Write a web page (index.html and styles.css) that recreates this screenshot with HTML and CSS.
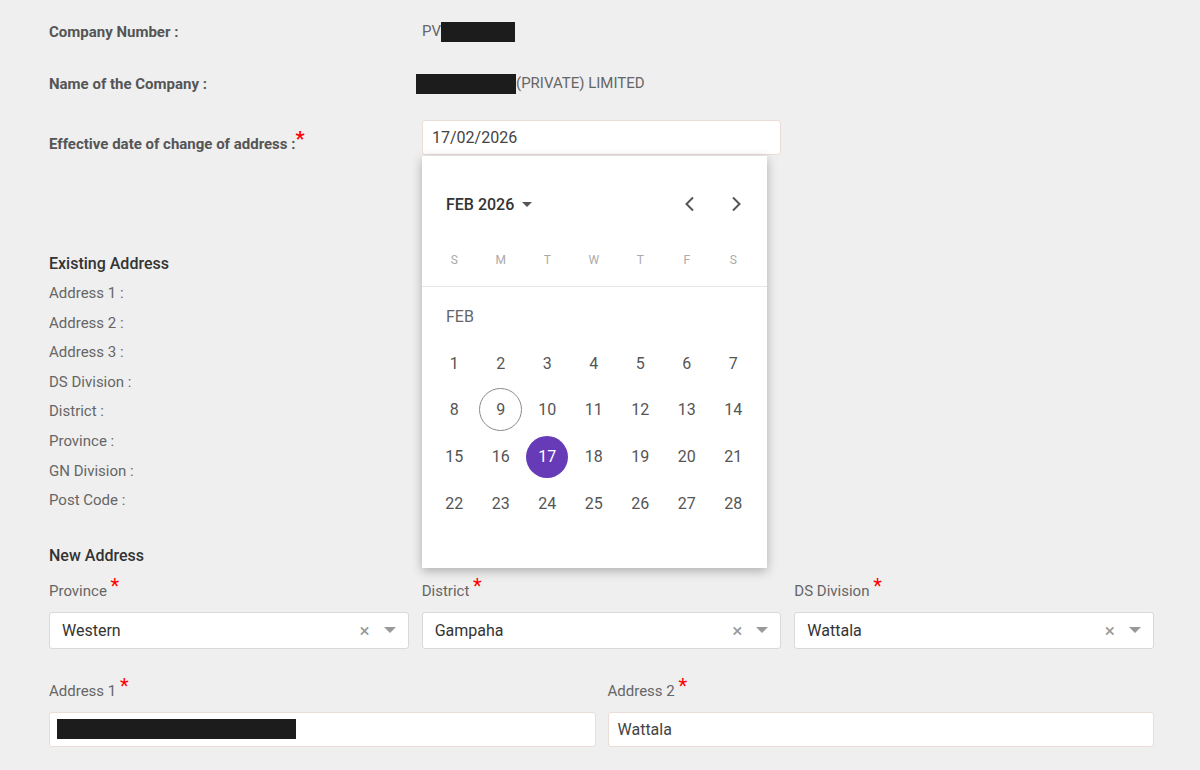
FILE: index.html
```html
<!DOCTYPE html>
<html lang="en">
<head>
  <meta charset="UTF-8">
  <meta name="viewport" content="width=device-width, initial-scale=1.0">
  <title>Change of Registered Address</title>
  <link rel="stylesheet" href="styles.css">
</head>
<body>

<main class="page">
  <div class="info-row">
    <div class="info-label">Company Number :</div>
    <div class="info-value">PV<span class="redact redact-id"></span></div>
  </div>
  <div class="info-row">
    <div class="info-label">Name of the Company :</div>
    <div class="info-value"><span class="redact redact-name"></span>(PRIVATE) LIMITED</div>
  </div>

  <div class="date-row">
    <label class="info-label date-label">Effective date of change of address :<span class="req">*</span></label>
    <div class="date-field">
      <input type="text" class="text-input" value="17/02/2026">

      <!-- open calendar -->
      <div class="datepicker">
        <div class="dp-head">
          <div class="dp-month">FEB 2026 <span class="caret caret-dark"></span></div>
          <div class="dp-nav">
            <svg width="12" height="16" viewBox="0 0 12 16"><path d="M9 1.5 L2.5 8 L9 14.5" fill="none" stroke="#555" stroke-width="2"/></svg>
            <svg width="12" height="16" viewBox="0 0 12 16"><path d="M3 1.5 L9.5 8 L3 14.5" fill="none" stroke="#555" stroke-width="2"/></svg>
          </div>
        </div>
        <div class="dp-week">
          <span>S</span><span>M</span><span>T</span><span>W</span><span>T</span><span>F</span><span>S</span>
        </div>
        <div class="dp-body">
          <div class="dp-label">FEB</div>
          <div class="dp-days" id="dpDays"></div>
        </div>
      </div>
    </div>
  </div>

  <section class="existing">
    <h3 class="section-title">Existing Address</h3>
    <div class="existing-line">Address 1 :</div>
    <div class="existing-line">Address 2 :</div>
    <div class="existing-line">Address 3 :</div>
    <div class="existing-line">DS Division :</div>
    <div class="existing-line">District :</div>
    <div class="existing-line">Province :</div>
    <div class="existing-line">GN Division :</div>
    <div class="existing-line">Post Code :</div>
  </section>

  <section class="new-address">
    <h3 class="section-title">New Address</h3>
    <div class="field-grid three">
      <div class="field">
        <label>Province <span class="req">*</span></label>
        <div class="select"><span class="select-value">Western</span><span class="clear">&times;</span><span class="caret"></span></div>
      </div>
      <div class="field">
        <label>District <span class="req">*</span></label>
        <div class="select"><span class="select-value">Gampaha</span><span class="clear">&times;</span><span class="caret"></span></div>
      </div>
      <div class="field">
        <label>DS Division <span class="req">*</span></label>
        <div class="select"><span class="select-value">Wattala</span><span class="clear">&times;</span><span class="caret"></span></div>
      </div>
    </div>
    <div class="field-grid two">
      <div class="field">
        <label>Address 1 <span class="req">*</span></label>
        <div class="text-input filled"><span class="redact redact-addr"></span></div>
      </div>
      <div class="field">
        <label>Address 2 <span class="req">*</span></label>
        <input type="text" class="text-input" value="Wattala">
      </div>
    </div>
  </section>
</main>

<script>
  const dpDays = document.getElementById('dpDays');
  const today = 9;
  const selected = 17;

  for (let d = 1; d <= 28; d++) {
    const cell = document.createElement('span');
    cell.classList.add('day');
    if (d === today) cell.classList.add('today');
    if (d === selected) cell.classList.add('selected');
    cell.textContent = d;
    dpDays.appendChild(cell);
  }
</script>

</body>
</html>
```

FILE: styles.css
```css
/* base */
body {
  margin: 0;
  padding: 0;
  background-color: #efefef;
  font-family: Roboto, 'Liberation Sans', sans-serif;
  color: #555;
}
.page {
  padding: 6px 46px 40px 49px;
}
.redact {
  display: inline-block;
  background-color: #1c1c1c;
  vertical-align: middle;
}
.redact-id {
  width: 74px;
  height: 20px;
}
.redact-name {
  width: 100px;
  height: 20px;
  margin-left: -6px;
}
.redact-addr {
  width: 239px;
  height: 20px;
}
.req {
  color: #f00;
  font-size: 20px;
  line-height: 0;
  position: relative;
  top: -3px;
}

/* company info */
.info-row {
  display: grid;
  grid-template-columns: 373px 1fr;
  align-items: center;
  height: 52px;
}
.info-label {
  font-size: 15px;
  font-weight: bold;
  color: #555;
}
.info-value {
  font-size: 15px;
  color: #666;
}
.date-row {
  display: grid;
  grid-template-columns: 373px 359px;
  margin-top: 10px;
}
.date-label {
  padding-top: 15px;
  line-height: 18px;
}
.date-field {
  position: relative;
}
.text-input {
  box-sizing: border-box;
  width: 100%;
  height: 35px;
  padding: 0 9px;
  background-color: #fff;
  border: 1px solid #ecdcd7;
  border-radius: 3px;
  font-family: inherit;
  font-size: 16px;
  color: #444;
  outline: none;
}
.text-input.filled {
  display: flex;
  align-items: center;
  padding: 0 7px;
}

/* calendar */
.datepicker {
  position: absolute;
  top: 36px;
  left: 0;
  width: 345px;
  height: 412px;
  background-color: #fff;
  box-shadow: 0 3px 10px rgba(0, 0, 0, 0.28);
  z-index: 5;
}
.dp-head {
  display: flex;
  align-items: center;
  justify-content: space-between;
  height: 40px;
  margin-top: 28px;
  padding: 0 25px 0 24px;
}
.dp-month {
  display: flex;
  align-items: center;
  gap: 8px;
  font-size: 16px;
  font-weight: 500;
  color: #333;
}
.dp-nav {
  display: flex;
  gap: 34px;
}
.dp-week,
.dp-days {
  display: grid;
  grid-template-columns: repeat(7, 46.5px);
  padding-left: 9px;
}
.dp-week {
  margin-top: 26px;
  padding-bottom: 16px;
  border-bottom: 1px solid #e6e6e6;
  line-height: 20px;
  font-size: 12px;
  color: #aaa;
  text-align: center;
}
.dp-label {
  margin: 20px 0 0 24px;
  line-height: 20px;
  font-size: 16px;
  color: #666;
}
.dp-days {
  margin-top: 13px;
  grid-auto-rows: 46.67px;
}
.day {
  position: relative;
  display: flex;
  align-items: center;
  justify-content: center;
  font-size: 16px;
  color: #555;
}
.day.today::before,
.day.selected::before {
  content: '';
  position: absolute;
  border-radius: 50%;
}
.day.today::before {
  width: 41px;
  height: 41px;
  border: 1px solid #8a8a8a;
}
.day.selected {
  color: #fff;
  isolation: isolate;
}
.day.selected::before {
  width: 42px;
  height: 42px;
  background-color: #673ab7;
  z-index: -1;
}

/* existing address */
.existing {
  margin-top: 99px;
}
.section-title {
  margin: 0;
  font-size: 16px;
  font-weight: 500;
  line-height: 20px;
  color: #333;
}
.existing .section-title {
  margin-bottom: 5px;
}
.existing-line {
  height: 29.6px;
  line-height: 29.6px;
  font-size: 15px;
  color: #666;
}

/* new address */
.new-address {
  margin-top: 30px;
}
.field-grid {
  display: grid;
  margin-top: 15px;
}
.field-grid.three {
  grid-template-columns: repeat(3, 1fr);
  column-gap: 13px;
}
.field-grid.two {
  grid-template-columns: repeat(2, 1fr);
  column-gap: 12px;
  margin-top: 32px;
}
.field label {
  display: block;
  height: 20px;
  line-height: 20px;
  margin-bottom: 11px;
  font-size: 15px;
  color: #666;
}
.select {
  box-sizing: border-box;
  display: flex;
  align-items: center;
  height: 37px;
  padding: 0 12px;
  background-color: #fff;
  border: 1px solid #d9d9d9;
  border-radius: 3px;
}
.select-value {
  flex: 1;
  font-size: 16px;
  color: #333;
}
.clear {
  font-size: 19px;
  color: #999;
  margin-right: 14px;
}
.caret {
  width: 0;
  height: 0;
  border-left: 6px solid transparent;
  border-right: 6px solid transparent;
  border-top: 6px solid #999;
}
.caret-dark {
  border-left-width: 5px;
  border-right-width: 5px;
  border-top: 5px solid #555;
}
```
